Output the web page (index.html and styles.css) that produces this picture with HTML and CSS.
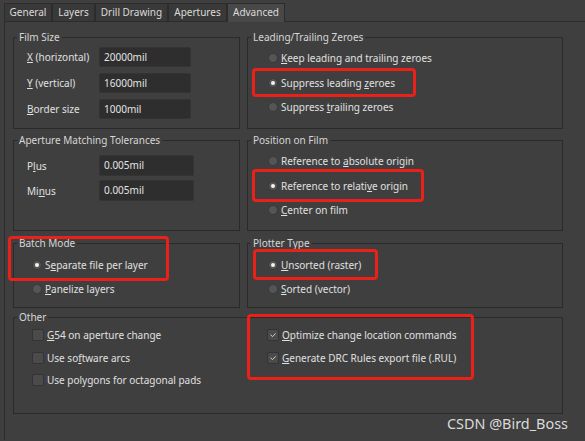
FILE: index.html
```html
<!DOCTYPE html>
<html>
<head>
<meta charset="utf-8">
<link rel="stylesheet" href="styles.css">
</head>
<body>
<div class="dialog">
  <div class="tabs">
    <div class="tab t-general">General</div>
    <div class="tab t-layers">Layers</div>
    <div class="tab t-drill">Drill Drawing</div>
    <div class="tab t-apert">Apertures</div>
    <div class="tab t-adv active">Advanced</div>
  </div>
  <div class="page">
    <div class="grid">
      <div class="group film">
        <div class="legend">Film Size</div>
        <div class="fields fields-film">
          <div class="field"><span class="label"><u>X</u> (horizontal)</span><span class="input w91">20000mil</span></div>
          <div class="field"><span class="label"><u>Y</u> (vertical)</span><span class="input w91">16000mil</span></div>
          <div class="field"><span class="label"><u>B</u>order size</span><span class="input w91">1000mil</span></div>
        </div>
      </div>

      <div class="group zeroes">
        <div class="legend">Leading/Trailing Zeroes</div>
        <div class="options opt-3">
          <div class="opt"><span class="radio"></span><span><u>K</u>eep leading and trailing zeroes</span></div>
          <div class="opt"><span class="radio on"></span><span>Suppress leading <u>z</u>eroes</span></div>
          <div class="opt"><span class="radio"></span><span>Suppress <u>t</u>railing zeroes</span></div>
        </div>
      </div>

      <div class="group aperture">
        <div class="legend">Aperture Matching Tolerances</div>
        <div class="fields fields-ap">
          <div class="field"><span class="label">P<u>l</u>us</span><span class="input w94">0.005mil</span></div>
          <div class="field"><span class="label">Mi<u>n</u>us</span><span class="input w94">0.005mil</span></div>
        </div>
      </div>

      <div class="group position">
        <div class="legend">Position on Film</div>
        <div class="options opt-3">
          <div class="opt"><span class="radio"></span><span>Reference to <u>a</u>bsolute origin</span></div>
          <div class="opt"><span class="radio on"></span><span>Reference to relati<u>v</u>e origin</span></div>
          <div class="opt"><span class="radio"></span><span><u>C</u>enter on film</span></div>
        </div>
      </div>

      <div class="group batch">
        <div class="legend">Batch Mode</div>
        <div class="options opt-2 left-opts">
          <div class="opt"><span class="radio on"></span><span>S<u>e</u>parate file per layer</span></div>
          <div class="opt"><span class="radio"></span><span><u>P</u>anelize layers</span></div>
        </div>
      </div>

      <div class="group plotter">
        <div class="legend">Plotter Type</div>
        <div class="options opt-2">
          <div class="opt"><span class="radio on"></span><span><u>U</u>nsorted (raster)</span></div>
          <div class="opt"><span class="radio"></span><span><u>S</u>orted (vector)</span></div>
        </div>
      </div>

      <div class="group other">
        <div class="legend">Other</div>
        <div class="checks">
          <div class="col">
            <div class="chk"><span class="box"></span><span><u>G</u>54 on aperture change</span></div>
            <div class="chk"><span class="box"></span><span>Use so<u>f</u>tware arcs</span></div>
            <div class="chk"><span class="box"></span><span>Use polygons for octagonal pads</span></div>
          </div>
          <div class="col">
            <div class="chk"><span class="box on"><svg viewBox="0 0 12 12" width="12" height="12"><path d="M3.5 5.8 L5.6 7.6 L8.6 4.4" fill="none" stroke="#cfcfcf" stroke-width="1"/></svg></span><span><u>O</u>ptimize change location commands</span></div>
            <div class="chk"><span class="box on"><svg viewBox="0 0 12 12" width="12" height="12"><path d="M3.5 5.8 L5.6 7.6 L8.6 4.4" fill="none" stroke="#cfcfcf" stroke-width="1"/></svg></span><span><u>G</u>enerate DRC Rules export file (.RUL)</span></div>
          </div>
        </div>
      </div>
    </div>
  </div>

  <div class="mark">CSDN @Bird_Boss</div>
  <div class="hl hl1"></div>
  <div class="hl hl2"></div>
  <div class="hl hl3"></div>
  <div class="hl hl4"></div>
  <div class="hl hl5"></div>
</div>
</body>
</html>
```
FILE: styles.css
```css
html, body {
  margin: 0;
  padding: 0;
  background: #3f3f3f;
}
body {
  width: 585px;
  height: 441px;
  overflow: hidden;
  font-family: "Noto Sans", "DejaVu Sans", sans-serif;
  font-size: 10px;
  color: #e0e0e0;
}
.dialog {
  position: relative;
  width: 585px;
  height: 441px;
}
u {
  text-decoration: underline;
  text-underline-offset: 1px;
}
.tabs {
  display: flex;
  padding: 3px 0 0 4px;
  height: 18px;
}
.tab {
  box-sizing: border-box;
  height: 18px;
  line-height: 17px;
  border: 1px solid #2c2c2c;
  border-bottom: none;
  background: #393939;
  text-align: center;
  font-size: 10px;
  color: #dadada;
}
.t-general { width: 48px; }
.t-layers { width: 43px; }
.t-drill { width: 73px; }
.t-apert { width: 59px; }
.t-adv { width: 58px; }
.tab.active {
  background: #484848;
  height: 19px;
  margin-bottom: -1px;
  position: relative;
}
.page {
  margin-left: 4px;
  border-top: 1px solid #2c2c2c;
  border-left: 1px solid #2c2c2c;
  height: 419px;
  padding: 15px 0 0 8px;
  box-sizing: border-box;
}
.grid {
  display: grid;
  grid-template-columns: 227px 316px;
  column-gap: 7px;
  grid-template-rows: 92px 11px 91px 12px 65px 9px 97px;
}
.group {
  box-sizing: border-box;
  border: 1px solid #2a2a2a;
  display: flex;
  flex-direction: column;
}
.film { grid-column: 1; grid-row: 1; }
.zeroes { grid-column: 2; grid-row: 1; }
.aperture { grid-column: 1; grid-row: 3; }
.position { grid-column: 2; grid-row: 3; }
.batch { grid-column: 1; grid-row: 5; }
.plotter { grid-column: 2; grid-row: 5; }
.other { grid-column: 1 / 3; grid-row: 7; }

.legend {
  align-self: flex-start;
  margin: -8px 0 0 3px;
  padding: 0 2px;
  height: 15px;
  line-height: 15px;
  background: #3f3f3f;
  color: #d6d6d6;
  font-size: 10px;
}
.fields {
  display: flex;
  flex-direction: column;
  padding-left: 13px;
}
.fields-film { padding-top: 2px; gap: 6px; }
.fields-ap { padding-top: 7px; gap: 4px; }
.field {
  display: flex;
  align-items: center;
}
.label {
  width: 72px;
}
.input {
  box-sizing: border-box;
  height: 20px;
  line-height: 18px;
  padding-left: 4px;
  background: #2e2e2e;
  border: 1px solid #343434;
  border-radius: 2px;
  color: #e4e4e4;
}
.fields-ap .input { height: 21px; line-height: 19px; }
.w91 { width: 92px; }
.w94 { width: 95px; }

.options {
  display: flex;
  flex-direction: column;
  padding-left: 20px;
}
.opt-3 .opt { height: 24.5px; }
.opt-3 { padding-top: 1px; }
.opt-2 { padding-top: 2px; }
.opt-2 .opt { height: 24px; }
.left-opts { padding-left: 18px; }
.opt, .chk {
  display: flex;
  align-items: center;
}
.radio {
  box-sizing: border-box;
  width: 10px;
  height: 10px;
  border-radius: 50%;
  background: #555555;
  border: 1px solid #3a3a3a;
  margin-right: 3px;
  display: flex;
  align-items: center;
  justify-content: center;
}
.radio.on::after {
  content: "";
  width: 4px;
  height: 4px;
  border-radius: 50%;
  background: #f4f4f4;
}
.checks {
  display: grid;
  grid-template-columns: 235px 1fr;
  padding-left: 18px;
  margin-top: -1px;
}
.col {
  display: flex;
  flex-direction: column;
}
.chk { height: 22.5px; }
.box {
  box-sizing: border-box;
  width: 12px;
  height: 12px;
  border-radius: 2px;
  background: #4b4b4b;
  border: 1px solid #333333;
  margin-right: 3px;
  display: flex;
}
.box svg { margin: -1px; }

.mark {
  position: absolute;
  left: 447px;
  top: 414px;
  font-family: "Noto Sans", "DejaVu Sans", sans-serif;
  font-size: 14.4px;
  color: #dadada;
  line-height: 20px;
}
.hl {
  position: absolute;
  box-sizing: border-box;
  border: 3px solid #ea2118;
  border-radius: 4px;
}
.hl1 { left: 252px; top: 68px; width: 164px; height: 29px; }
.hl2 { left: 252px; top: 169px; width: 172px; height: 33px; }
.hl3 { left: 8px; top: 236px; width: 161px; height: 45px; }
.hl4 { left: 253px; top: 249px; width: 125px; height: 31px; }
.hl5 { left: 247px; top: 314px; width: 227px; height: 66px; }
```
